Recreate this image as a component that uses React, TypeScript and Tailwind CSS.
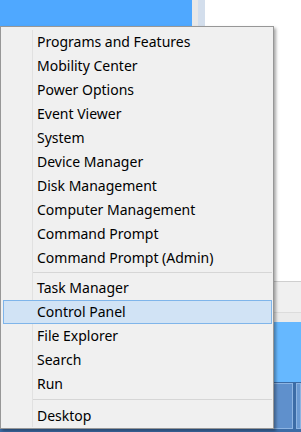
import React from 'react';

const groups: string[][] = [
  [
    'Programs and Features',
    'Mobility Center',
    'Power Options',
    'Event Viewer',
    'System',
    'Device Manager',
    'Disk Management',
    'Computer Management',
    'Command Prompt',
    'Command Prompt (Admin)',
  ],
  ['Task Manager', 'Control Panel', 'File Explorer', 'Search', 'Run'],
  ['Desktop'],
];

const active = 'Control Panel';

function MenuItem({ label }: { label: string }) {
  if (label === active) {
    return (
      <div className="ml-[2px] mr-[1px] flex h-[24px] items-center border border-[#7fb5ea] bg-[#d1e3f5] pb-px pl-[33px]">
        {label}
      </div>
    );
  }
  return <div className="flex h-[24px] items-center pb-px pl-[36px]">{label}</div>;
}

function Background() {
  return (
    <div className="flex h-full flex-col">
      <div className="flex h-[281px]">
        <div className="w-[192px] bg-[#4fa8ff]" />
        <div className="w-[6px] bg-[#e8e8e8]" />
        <div className="w-[7px] bg-[#d3deec]" />
        <div className="flex-1 bg-white" />
      </div>
      <div className="h-[31px] border-t border-[#cfcfcf] bg-[#f0f0f0]" />
      <div className="h-[10px] border-t border-[#dcdcdc] bg-[#ebebeb]" />
      <div className="h-[60px] bg-[#66b8ff]" />
      <div className="flex flex-1 gap-[3px] bg-[#3c6ca6] pt-px">
        <div className="h-[46px] w-[293px] border border-[#8db4e2] bg-[#5f90cc]" />
        <div className="h-[46px] flex-1 border border-[#8db4e2] bg-[#6a9ad3]" />
      </div>
    </div>
  );
}

export default function App() {
  return (
    <div
      className="relative h-[432px] w-[301px] overflow-hidden bg-white text-[14px] leading-none text-black"
      style={{ fontFamily: '"Segoe UI", "Noto Sans", "Open Sans", sans-serif' }}
    >
      <Background />

      {/* the Win+X menu */}
      <div className="absolute left-0 top-[26px] h-[403px] w-[274px] border border-[#979797] bg-[#f0f0f0] pt-[3px] shadow-[2px_2px_3px_rgba(0,0,0,0.35)]">
        <div className="absolute bottom-[1px] left-[31px] top-[3px] w-px bg-[#e1e1e1]" />
        {groups.map((g, i) => (
          <div key={i} className="relative">
            {i > 0 && (
              <div
                className={`ml-[32px] mr-px h-px bg-[#d6d6d6] ${
                  i === 1 ? 'mb-[3px] mt-[2px]' : 'mb-[4px] mt-[3px]'
                }`}
              />
            )}
            {g.map((label) => (
              <MenuItem key={label} label={label} />
            ))}
          </div>
        ))}
      </div>
    </div>
  );
}
